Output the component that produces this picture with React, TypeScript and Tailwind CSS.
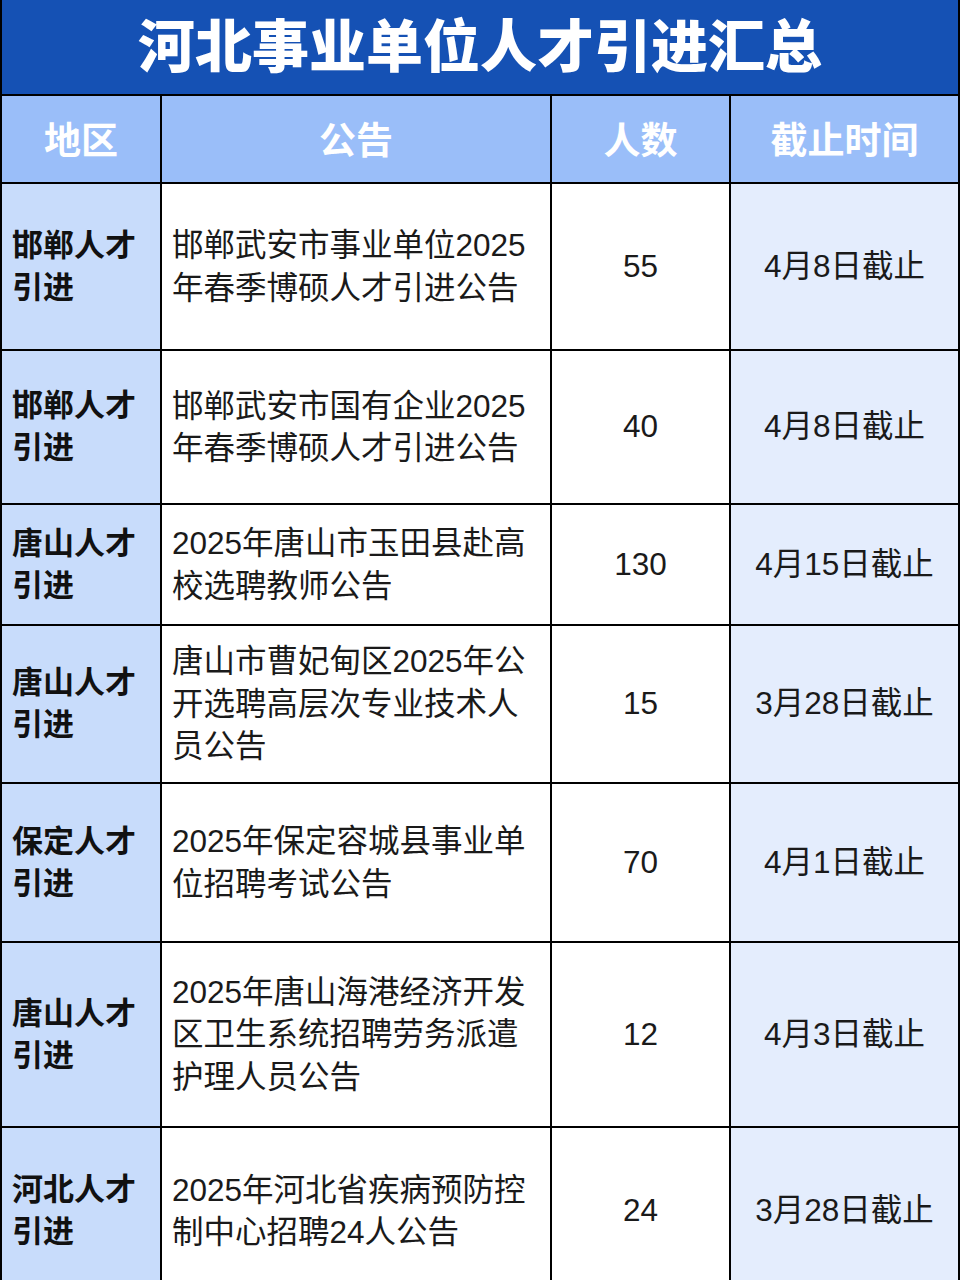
import React from 'react';

interface Row {
    region: string[];
    notice: string[];
    count: string;
    deadline: string;
    height: string;
}

const rows: Row[] = [
    { region: ['邯郸人才', '引进'], notice: ['邯郸武安市事业单位2025', '年春季博硕人才引进公告'], count: '55', deadline: '4月8日截止', height: 'h-[165px]' },
    { region: ['邯郸人才', '引进'], notice: ['邯郸武安市国有企业2025', '年春季博硕人才引进公告'], count: '40', deadline: '4月8日截止', height: 'h-[152px]' },
    { region: ['唐山人才', '引进'], notice: ['2025年唐山市玉田县赴高', '校选聘教师公告'], count: '130', deadline: '4月15日截止', height: 'h-[119px]' },
    { region: ['唐山人才', '引进'], notice: ['唐山市曹妃甸区2025年公', '开选聘高层次专业技术人', '员公告'], count: '15', deadline: '3月28日截止', height: 'h-[156px]' },
    { region: ['保定人才', '引进'], notice: ['2025年保定容城县事业单', '位招聘考试公告'], count: '70', deadline: '4月1日截止', height: 'h-[157px]' },
    { region: ['唐山人才', '引进'], notice: ['2025年唐山海港经济开发', '区卫生系统招聘劳务派遣', '护理人员公告'], count: '12', deadline: '4月3日截止', height: 'h-[183px]' },
    { region: ['河北人才', '引进'], notice: ['2025年河北省疾病预防控', '制中心招聘24人公告'], count: '24', deadline: '3月28日截止', height: 'h-[166px]' },
];

export default function App() {
    return (
        <div className="w-[960px] h-[1280px] overflow-hidden bg-white font-['Liberation_Sans','Noto_Sans_CJK_SC',sans-serif]">
            <div className="grid grid-cols-[158px_388px_177px_227px] gap-[2px] bg-black px-[2px] pb-[2px]">

                {/* Title */}
                <div className="col-span-4 h-[94px] bg-[#1551b4] flex items-center justify-center">
                    <h1 className="text-[57px] leading-none font-black text-white">
                        河北事业单位人才引进汇总
                    </h1>
                </div>

                {/* Header */}
                {['地区', '公告', '人数', '截止时间'].map((h) => (
                    <div key={h} className="h-[86px] bg-[#9abef9] flex items-center justify-center pt-[4px]">
                        <span className="text-[37px] font-bold text-white leading-none">{h}</span>
                    </div>
                ))}

                {/* Body */}
                {rows.map((r, i) => (
                    <React.Fragment key={i}>
                        <div className={`${r.height} bg-[#c8dcfb] flex items-center pl-[10px]`}>
                            <p className="text-[31px] leading-[42px] font-bold text-[#111]">
                                {r.region.map((l) => <span key={l} className="block">{l}</span>)}
                            </p>
                        </div>
                        <div className={`${r.height} bg-white flex items-center pl-[10px]`}>
                            <p className="text-[31.5px] leading-[42.5px] text-[#1a1a1a] whitespace-nowrap">
                                {r.notice.map((l) => <span key={l} className="block">{l}</span>)}
                            </p>
                        </div>
                        <div className={`${r.height} bg-white flex items-center justify-center`}>
                            <span className="text-[31.5px] text-[#1a1a1a]">{r.count}</span>
                        </div>
                        <div className={`${r.height} bg-[#e4edfd] flex items-center justify-center`}>
                            <span className="text-[31.5px] text-[#1a1a1a] whitespace-nowrap">{r.deadline}</span>
                        </div>
                    </React.Fragment>
                ))}
            </div>
        </div>
    );
}
